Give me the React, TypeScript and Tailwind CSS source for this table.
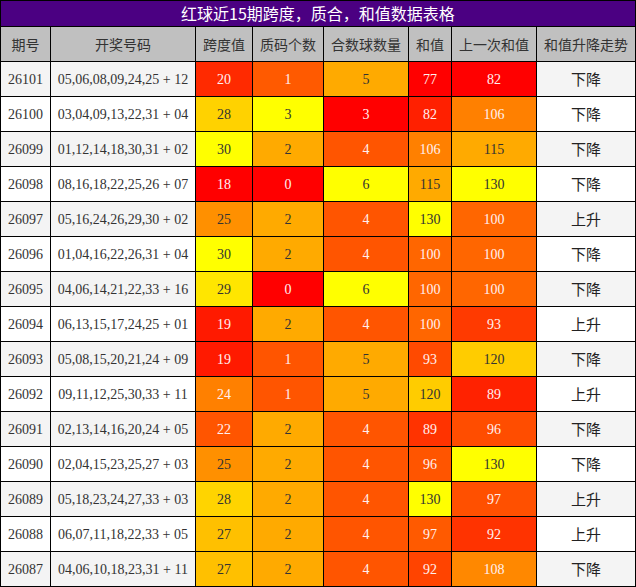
import React from "react";

type Cell = [string, string, boolean]; // value, bg, white text

const rows: { p: string; n: string; c: Cell[]; t: string }[] = [
  { p: "26101", n: "05,06,08,09,24,25 + 12", c: [["20", "#FF2A00", true], ["1", "#FF5A00", true], ["5", "#FFAA00", false], ["77", "#FF0000", true], ["82", "#FF0000", true]], t: "下降" },
  { p: "26100", n: "03,04,09,13,22,31 + 04", c: [["28", "#FFD200", false], ["3", "#FFFF00", false], ["3", "#FF0000", true], ["82", "#FF2000", true], ["106", "#FF8000", true]], t: "下降" },
  { p: "26099", n: "01,12,14,18,30,31 + 02", c: [["30", "#FFFF00", false], ["2", "#FFAA00", false], ["4", "#FF5500", true], ["106", "#FF8000", true], ["115", "#FFAA00", false]], t: "下降" },
  { p: "26098", n: "08,16,18,22,25,26 + 07", c: [["18", "#FF0000", true], ["0", "#FF0000", true], ["6", "#FFFF00", false], ["115", "#FFAA00", false], ["130", "#FFFF00", false]], t: "下降" },
  { p: "26097", n: "05,16,24,26,29,30 + 02", c: [["25", "#FF9000", false], ["2", "#FFAA00", false], ["4", "#FF5500", true], ["130", "#FFFF00", false], ["100", "#FF6600", true]], t: "上升" },
  { p: "26096", n: "01,04,16,22,26,31 + 04", c: [["30", "#FFFF00", false], ["2", "#FFAA00", false], ["4", "#FF5500", true], ["100", "#FF6600", true], ["100", "#FF6600", true]], t: "下降" },
  { p: "26095", n: "04,06,14,21,22,33 + 16", c: [["29", "#FFE600", false], ["0", "#FF0000", true], ["6", "#FFFF00", false], ["100", "#FF6600", true], ["100", "#FF6600", true]], t: "下降" },
  { p: "26094", n: "06,13,15,17,24,25 + 01", c: [["19", "#FF1A00", true], ["2", "#FFAA00", false], ["4", "#FF5500", true], ["100", "#FF6600", true], ["93", "#FF3A00", true]], t: "上升" },
  { p: "26093", n: "05,08,15,20,21,24 + 09", c: [["19", "#FF1A00", true], ["1", "#FF5500", true], ["5", "#FFAA00", false], ["93", "#FF4A00", true], ["120", "#FFCC00", false]], t: "下降" },
  { p: "26092", n: "09,11,12,25,30,33 + 11", c: [["24", "#FF8000", true], ["1", "#FF5500", true], ["5", "#FFAA00", false], ["120", "#FFCC00", false], ["89", "#FF2200", true]], t: "上升" },
  { p: "26091", n: "02,13,14,16,20,24 + 05", c: [["22", "#FF5500", true], ["2", "#FFAA00", false], ["4", "#FF5500", true], ["89", "#FF3300", true], ["96", "#FF4D00", true]], t: "下降" },
  { p: "26090", n: "02,04,15,23,25,27 + 03", c: [["25", "#FF9000", false], ["2", "#FFAA00", false], ["4", "#FF5500", true], ["96", "#FF5500", true], ["130", "#FFFF00", false]], t: "下降" },
  { p: "26089", n: "05,18,23,24,27,33 + 03", c: [["28", "#FFD400", false], ["2", "#FFAA00", false], ["4", "#FF5500", true], ["130", "#FFFF00", false], ["97", "#FF5000", true]], t: "上升" },
  { p: "26088", n: "06,07,11,18,22,33 + 05", c: [["27", "#FFC000", false], ["2", "#FFAA00", false], ["4", "#FF5500", true], ["97", "#FF5A00", true], ["92", "#FF3300", true]], t: "上升" },
  { p: "26087", n: "04,06,10,18,23,31 + 11", c: [["27", "#FFC000", false], ["2", "#FFAA00", false], ["4", "#FF5500", true], ["92", "#FF4400", true], ["108", "#FF8800", true]], t: "下降" },
];

const headers = ["期号", "开奖号码", "跨度值", "质码个数", "合数球数量", "和值", "上一次和值", "和值升降走势"];

const cjk = "font-['Noto_Sans_CJK_SC',sans-serif]";
const serif = "font-['Liberation_Serif','Noto_Sans_CJK_SC',serif]";

export default function App() {
  return (
    <div className="w-[636px] h-[587px] bg-black p-px flex flex-col gap-px">
      <div className={`h-[25px] bg-[#4B0082] text-white text-[16px] leading-[25px] text-center ${cjk}`}>
        红球近15期跨度，质合，和值数据表格
      </div>
      <div className="grid grid-cols-[49px_144px_56px_70px_84px_42px_84px_98px] auto-rows-[34px] gap-px">
        {headers.map((h) => (
          <div key={h} className={`bg-[#C0C0C0] text-[#333] text-[14px] flex items-center justify-center ${cjk}`}>
            {h}
          </div>
        ))}
        {rows.map((r, i) => {
          const stripe = i % 2 === 0 ? "bg-[#F4F4F4]" : "bg-white";
          return (
            <React.Fragment key={r.p}>
              <div className={`${stripe} text-[#333] text-[14px] flex items-center justify-center ${serif}`}>{r.p}</div>
              <div className={`${stripe} text-[#333] text-[14px] flex items-center justify-center whitespace-nowrap ${serif}`}>{r.n}</div>
              {r.c.map(([v, bg, w], j) => (
                <div
                  key={j}
                  className={`text-[14px] flex items-center justify-center ${serif} ${w ? "text-[#FFF0F0]" : "text-[#333]"}`}
                  style={{ backgroundColor: bg }}
                >
                  {v}
                </div>
              ))}
              <div className={`${stripe} text-[#222] text-[15px] flex items-center justify-center ${cjk}`}>{r.t}</div>
            </React.Fragment>
          );
        })}
      </div>
    </div>
  );
}
